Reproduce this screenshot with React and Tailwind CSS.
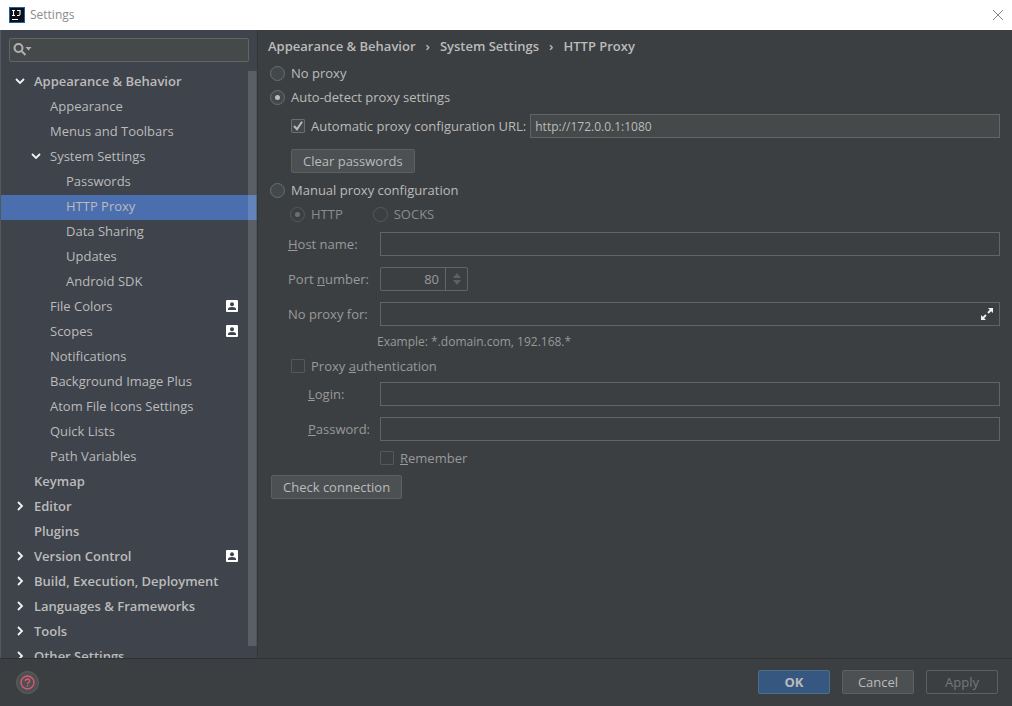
import { useState } from 'react'
import clsx from 'clsx'

const tree = [
  { label: 'Appearance & Behavior', level: 0, open: true },
  { label: 'Appearance', level: 1 },
  { label: 'Menus and Toolbars', level: 1 },
  { label: 'System Settings', level: 1, open: true },
  { label: 'Passwords', level: 2 },
  { label: 'HTTP Proxy', level: 2 },
  { label: 'Data Sharing', level: 2 },
  { label: 'Updates', level: 2 },
  { label: 'Android SDK', level: 2 },
  { label: 'File Colors', level: 1, project: true },
  { label: 'Scopes', level: 1, project: true },
  { label: 'Notifications', level: 1 },
  { label: 'Background Image Plus', level: 1 },
  { label: 'Atom File Icons Settings', level: 1 },
  { label: 'Quick Lists', level: 1 },
  { label: 'Path Variables', level: 1 },
  { label: 'Keymap', level: 0 },
  { label: 'Editor', level: 0, open: false },
  { label: 'Plugins', level: 0 },
  { label: 'Version Control', level: 0, open: false, project: true },
  { label: 'Build, Execution, Deployment', level: 0, open: false },
  { label: 'Languages & Frameworks', level: 0, open: false },
  { label: 'Tools', level: 0, open: false },
  { label: 'Other Settings', level: 0, open: false }
]

const indents = ['pl-3', 'pl-7', 'pl-11']

function Logo() {
  return (
    <svg className="w-4 h-4" viewBox="0 0 16 16">
      <rect width="16" height="16" fill="#1d5fa8" />
      <rect x="1" y="1" width="14" height="14" fill="#0b0f16" />
      <path d="M3 3.5h3M4.5 3.5v5M3 8.5h3M8 3.5h3v3.6q0 1.4-1.4 1.4H8M3 12.5h6" fill="none" stroke="#fff" strokeWidth="1.1" />
    </svg>
  )
}

function Chevron({ open }) {
  return (
    <svg className="w-4 h-4" viewBox="0 0 16 16" fill="none" stroke="#f2f2f2" strokeWidth="1.8">
      <path d={open ? 'M4 6l4 4 4-4' : 'M6 4l4 4-4 4'} />
    </svg>
  )
}

function ProjectIcon() {
  return (
    <svg className="w-3 h-3" viewBox="0 0 12 12">
      <rect width="12" height="12" rx="1" fill="#fff" />
      <circle cx="6" cy="4.2" r="2" fill="#3f434b" />
      <path d="M2 10V9q0-2 4-2t4 2v1z" fill="#3f434b" />
    </svg>
  )
}

function Radio({ label, ...props }) {
  return (
    <label className={clsx('flex items-center gap-1.5 h-6', props.disabled && 'text-[#8c8c8c]')}>
      <input
        type="radio"
        className="appearance-none grid place-content-center w-[15px] h-[15px] rounded-full border border-[#6b6e70] bg-[#43494a] checked:before:block before:hidden before:w-[5px] before:h-[5px] before:rounded-full before:bg-[#bbbbbb] disabled:bg-transparent disabled:border-[#56595b] disabled:before:bg-[#6c6f71]"
        {...props}
      />
      {label}
    </label>
  )
}

function Checkbox({ children, ...props }) {
  return (
    <label className={clsx('flex items-center gap-1.5 h-6', props.disabled && 'text-[#999999]')}>
      <span className="relative w-3.5 h-3.5">
        <input
          type="checkbox"
          className="peer block appearance-none w-3.5 h-3.5 rounded-[1px] border border-[#6b6e70] bg-[#43494a] disabled:bg-transparent disabled:border-[#56595b]"
          {...props}
        />
        <svg className="absolute inset-0 hidden peer-checked:block pointer-events-none" viewBox="0 0 14 14" fill="none" stroke="#bbbbbb" strokeWidth="2">
          <path d="M3 7l3 3.2L11 2.8" />
        </svg>
      </span>
      <span>{children}</span>
    </label>
  )
}

function Button({ className, ...props }) {
  return <button className={clsx('h-6 rounded-xs border text-center', className)} {...props} />
}

const fieldClass = 'h-6 flex-1 min-w-0 border border-[#646464] px-1 outline-none'

// Disabled text row with the label column on the left
function Field({ id, label, indent, children, ...props }) {
  return (
    <div className="flex h-6 mb-[11px] text-[#999999]">
      <label htmlFor={id} className={clsx('flex items-center w-28 shrink-0', indent ? 'pl-10' : 'pl-5')}>
        <span>{label}</span>
      </label>
      {children || <input id={id} className={fieldClass} disabled {...props} />}
    </div>
  )
}

function Sidebar() {
  const [selected, setSelected] = useState('HTTP Proxy')

  return (
    <aside className="flex flex-col w-[258px] shrink-0 bg-[#3f434b] border-l border-l-[#55585a] border-r border-r-[#333639]">
      <div className="relative m-2">
        <svg className="absolute left-1 top-1 w-5 h-4" viewBox="0 0 20 16" fill="none" stroke="#afb1b3" strokeWidth="2">
          <circle cx="5.5" cy="6" r="4" />
          <path d="M8.5 9l4 4" />
          <path d="M12.5 5h6l-3 3.5z" fill="#afb1b3" stroke="none" />
        </svg>
        <input aria-label="Search settings" className="block w-full h-6 pl-7 rounded-xs border border-[#646464] bg-[#45494a] outline-none" />
      </div>

      <nav className="relative flex-1 min-h-0 overflow-hidden">
        {tree.map((item) => (
          <button
            key={item.label}
            onClick={() => setSelected(item.label)}
            className={clsx(
              'flex items-center w-full h-[25px] pr-[19px] pb-[3px] text-left whitespace-nowrap',
              indents[item.level],
              item.level === 0 && 'font-semibold',
              selected === item.label && 'bg-[#4b6eaf]'
            )}
          >
            <span className="w-4 h-4 -ml-px mr-1.5">
              {item.open !== undefined && <Chevron open={item.open} />}
            </span>
            <span className="flex-1">{item.label}</span>
            {item.project && <ProjectIcon />}
          </button>
        ))}
        <div className="absolute right-0 top-px bottom-3 w-[9px] border-r border-[#3f434b]/40 bg-white/15" />
      </nav>
    </aside>
  )
}

function ProxyForm() {
  const [mode, setMode] = useState('auto')
  const [usePac, setUsePac] = useState(true)
  const [url, setUrl] = useState('http://172.0.0.1:1080')

  return (
    <main className="flex-1 min-w-0 pl-2.5 pr-3">
      {/* Breadcrumbs */}
      <h1 className="flex items-center gap-2.5 h-[31px] font-semibold">
        <span>Appearance & Behavior</span>
        <span>›</span>
        <span>System Settings</span>
        <span>›</span>
        <span>HTTP Proxy</span>
      </h1>

      <div className="pl-0.5">
        <Radio name="mode" label="No proxy" checked={mode === 'none'} onChange={() => setMode('none')} />
        <Radio name="mode" label="Auto-detect proxy settings" checked={mode === 'auto'} onChange={() => setMode('auto')} />
        <div className="flex items-center gap-1 mt-[5px] pl-[21px]">
          <Checkbox checked={usePac} onChange={(e) => setUsePac(e.target.checked)}>
            Automatic proxy configuration URL:
          </Checkbox>
          <input
            aria-label="Automatic proxy configuration URL"
            value={url}
            onChange={(e) => setUrl(e.target.value)}
            className={clsx(fieldClass, 'bg-[#45494a] text-xs')}
          />
        </div>
        <div className="mt-[11px] mb-[5px] pl-[21px]">
          <Button className="border-[#5e6060] bg-[#4c5052] px-[11px]">Clear passwords</Button>
        </div>
        <Radio name="mode" label="Manual proxy configuration" checked={mode === 'manual'} onChange={() => setMode('manual')} />
        <div className="flex gap-[30px] pl-5">
          <Radio name="protocol" label="HTTP" defaultChecked disabled />
          <Radio name="protocol" label="SOCKS" disabled />
        </div>
      </div>

      <div className="mt-1.5">
        <Field id="host" label={<><u>H</u>ost name:</>} />
        <Field id="port" label={<>Port <u>n</u>umber:</>}>
          <div className="flex w-[88px] h-6 rounded-xs border border-[#646464]">
            <input id="port" defaultValue="80" disabled className="flex-1 min-w-0 pr-1.5 text-right" />
            <div className="flex flex-col items-center justify-center gap-0.5 w-[22px] border-l border-[#646464]">
              <button aria-label="Increase port" disabled>
                <svg className="block w-2 h-[5px]" viewBox="0 0 8 5" fill="#5e6062"><path d="M0 5l4-5 4 5z" /></svg>
              </button>
              <button aria-label="Decrease port" disabled>
                <svg className="block w-2 h-[5px]" viewBox="0 0 8 5" fill="#5e6062"><path d="M0 0l4 5 4-5z" /></svg>
              </button>
            </div>
          </div>
        </Field>
        <Field id="exceptions" label="No proxy for:">
          <div className="flex flex-1 items-center h-6 pr-1.5 border border-[#646464]">
            <input id="exceptions" disabled className="flex-1 min-w-0 px-1" />
            <button aria-label="Expand">
              <svg className="block w-3 h-3" viewBox="0 0 12 12" fill="none" stroke="#f0f0f0" strokeWidth="1.8">
                <path d="M7 5l4-4M5 7l-4 4" />
                <path d="M7 0h5v5zM0 7v5h5z" fill="#f0f0f0" stroke="none" />
              </svg>
            </button>
          </div>
        </Field>
      </div>

      <p className="flex items-center h-6 -mt-[7px] pl-[109px] text-xs text-[#999999]">Example: *.domain.com, 192.168.*</p>
      <div className="mb-1 pl-[23px]">
        <Checkbox disabled>Proxy <u>a</u>uthentication</Checkbox>
      </div>
      <Field id="login" indent label={<><u>L</u>ogin:</>} />
      <Field id="password" type="password" indent label={<><u>P</u>assword:</>} />
      <div className="-mt-1.5 pl-28">
        <Checkbox disabled><u>R</u>emember</Checkbox>
      </div>
      <div className="mt-[5px] pl-[3px]">
        <Button className="border-[#5e6060] bg-[#4c5052] px-[11px]">Check connection</Button>
      </div>
    </main>
  )
}

function App() {
  return (
    <div className="flex flex-col h-screen bg-[#3c3f41] font-['Open_Sans','Noto_Sans',sans-serif] text-[13px] leading-5 text-[#bbbbbb]">
      {/* Title bar */}
      <header className="flex items-center h-[30px] shrink-0 pl-[9px] pr-2 bg-white text-[#8c8c8c]">
        <Logo />
        <span className="flex-1 pl-[5px] text-xs">Settings</span>
        <button aria-label="Close">
          <svg className="block w-3 h-3" viewBox="0 0 12 12" stroke="#858585"><path d="M1 1l10 10M11 1L1 11" /></svg>
        </button>
      </header>

      <div className="flex flex-1 min-h-0">
        <Sidebar />
        <ProxyForm />
      </div>

      {/* Footer */}
      <footer className="flex items-center gap-3 h-12 shrink-0 pl-4 pr-3.5 pb-px border-t border-[#2f3133]">
        <button aria-label="Help" className="flex items-center justify-center w-[23px] h-[23px] mr-auto rounded-full border border-[#5e6060] bg-[#4c5052]">
          <svg className="w-[15px] h-[15px]" viewBox="0 0 15 15" fill="none" stroke="#db5872" strokeWidth="1.4">
            <circle cx="7.5" cy="7.5" r="6.5" />
            <path d="M5.4 6.2c0-2.9 4.2-2.9 4.2 0 0 1.4-2.1 1.4-2.1 2.8M7.5 10v1.5" />
          </svg>
        </button>
        <Button className="w-[72px] border-[#4c708c] bg-[#365880] font-bold">OK</Button>
        <Button className="w-[72px] border-[#5e6060] bg-[#4c5052]">Cancel</Button>
        <Button className="w-[72px] border-[#5e6060] text-[#777777]" disabled>Apply</Button>
      </footer>
    </div>
  )
}

export default App
